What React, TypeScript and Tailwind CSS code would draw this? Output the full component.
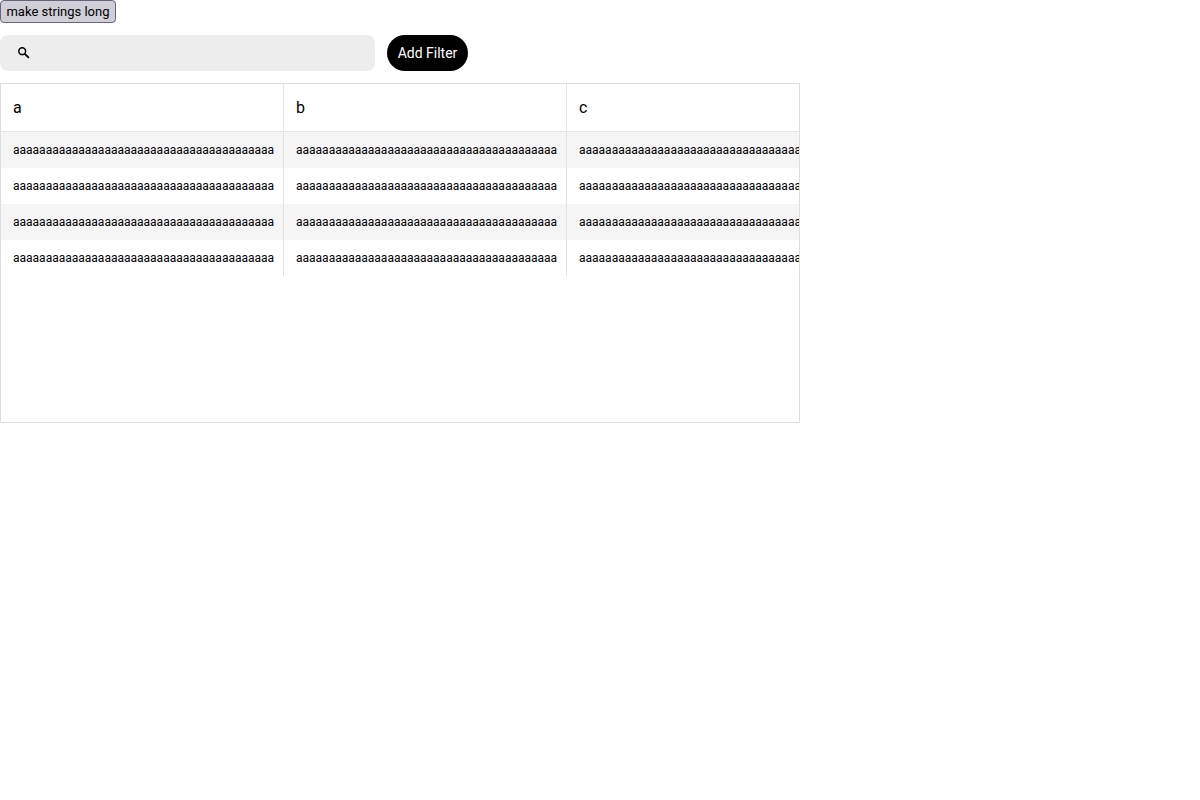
import { useState } from "react";

const columns = ["a", "b", "c"];
const rows = [0, 1, 2, 3];

export default function App() {
  const [length, setLength] = useState(40);
  const [query, setQuery] = useState("");

  return (
    <main className="flex flex-col items-start gap-3 bg-white font-['Roboto','Liberation_Sans',sans-serif] text-black">
      <button
        type="button"
        onClick={() => setLength(80)}
        className="h-[23px] min-w-[116px] rounded-sm border border-[#67657a] bg-[#d0ced7] px-1 text-[13px] leading-5"
      >
        make strings long
      </button>

      <div className="flex w-full items-center gap-3">
        <label className="flex h-9 w-full max-w-[375px] items-center gap-3 rounded-lg bg-[#ededed] pr-3 pl-[18px]">
          <svg
            viewBox="0 0 12 12"
            className="size-3 shrink-0"
            fill="none"
            stroke="currentColor"
            aria-hidden="true"
          >
            <circle cx="4.2" cy="4.2" r="3.4" strokeWidth="1.5" />
            <path d="M6.8 6.8 10.9 10.9" strokeWidth="1.8" />
          </svg>
          <input
            type="text"
            aria-label="Search"
            value={query}
            onChange={(event) => setQuery(event.target.value)}
            className="min-w-0 flex-1 bg-transparent text-sm outline-none"
          />
        </label>
        <button
          type="button"
          className="h-9 min-w-[81px] shrink-0 rounded-full bg-black px-2.5 text-sm text-white"
        >
          Add Filter
        </button>
      </div>

      <div className="h-[340px] w-full max-w-[800px] overflow-hidden border border-[#dedede]">
        <table className="border-separate border-spacing-0 text-left">
          <thead>
            <tr>
              {columns.map((column) => (
                <th
                  key={column}
                  scope="col"
                  className="h-12 min-w-[283px] border-r border-b border-[#e5e5e5] px-3 text-base font-normal"
                >
                  {column}
                </th>
              ))}
            </tr>
          </thead>
          <tbody>
            {rows.map((row) => (
              <tr key={row} className="odd:bg-[#f5f5f5]">
                {columns.map((column) => (
                  <td
                    key={column}
                    className="h-9 border-r border-[#e2e2e2] pr-2 pl-3 text-xs whitespace-nowrap"
                  >
                    {"a".repeat(length)}
                  </td>
                ))}
              </tr>
            ))}
          </tbody>
        </table>
      </div>
    </main>
  );
}
